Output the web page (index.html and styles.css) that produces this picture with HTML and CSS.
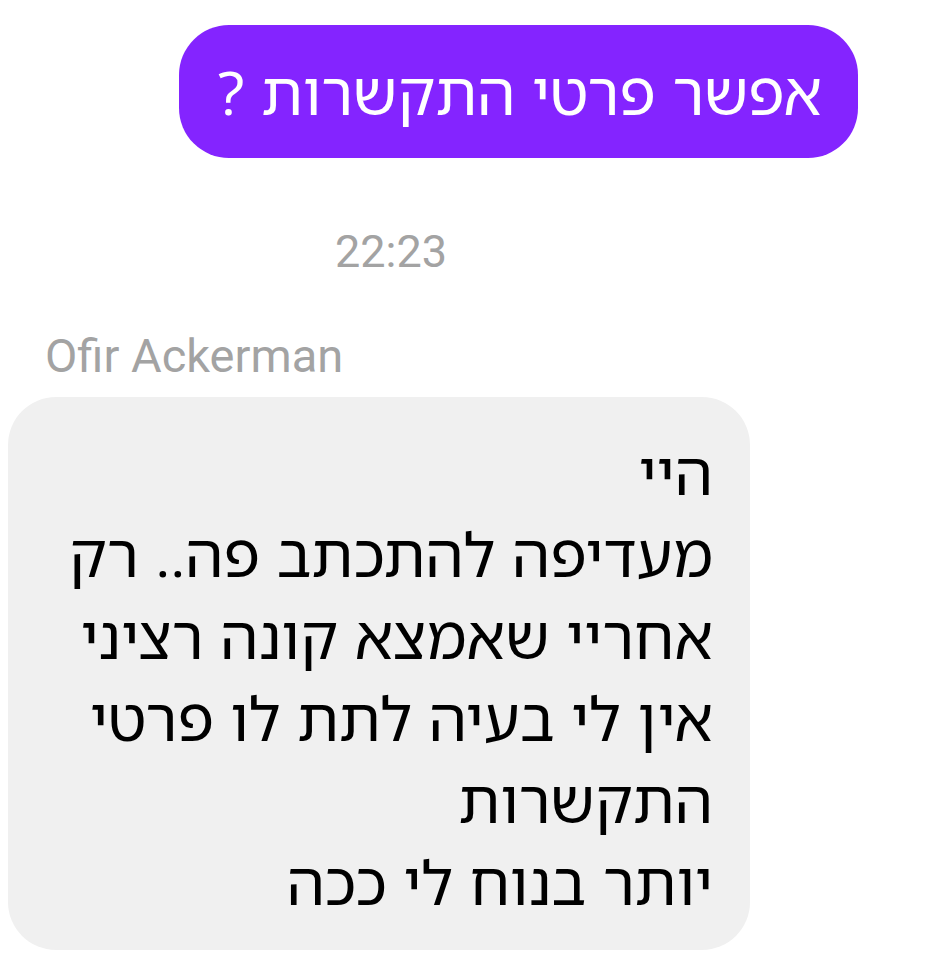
FILE: index.html
```html
<!DOCTYPE html>
<html lang="he">
<head>
<meta charset="utf-8">
<link rel="stylesheet" href="styles.css">
</head>
<body>
<div class="chat">
  <div class="row-out">
    <div class="bubble-out" dir="rtl">אפשר פרטי התקשרות ?</div>
  </div>
  <div class="time">22:23</div>
  <div class="sender">Ofir Ackerman</div>
  <div class="bubble-in" dir="rtl">היי<br>מעדיפה להתכתב פה.. רק<br>אחריי שאמצא קונה רציני<br>אין לי בעיה לתת לו פרטי<br>התקשרות<br>יותר בנוח לי ככה</div>
</div>
</body>
</html>
```
FILE: styles.css
```css
html, body {
  margin: 0;
  padding: 0;
  background: #ffffff;
}
.chat {
  width: 931px;
  height: 967px;
  overflow: hidden;
  font-family: "Noto Sans Hebrew", "Liberation Sans", Roboto, sans-serif;
}
.row-out {
  display: flex;
  justify-content: flex-end;
  padding: 25px 73px 0 0;
}
.bubble-out {
  background: #8424ff;
  color: #ffffff;
  font-size: 61px;
  line-height: 133px;
  height: 133px;
  padding: 0 36px 0 38px;
  border-radius: 50px;
  white-space: nowrap;
}
.time {
  font-family: Roboto, sans-serif;
  color: #a3a3a3;
  font-size: 45px;
  line-height: 50px;
  margin: 69px 0 0 335px;
}
.sender {
  font-family: Roboto, sans-serif;
  color: #a3a3a3;
  font-size: 47px;
  line-height: 50px;
  margin: 54px 0 0 45px;
}
.bubble-in {
  width: 705px;
  margin: 16px 0 0 8px;
  background: #f0f0f0;
  color: #000000;
  font-size: 61px;
  line-height: 82px;
  padding: 34px 37px 27px 0;
  border-radius: 48px;
  white-space: nowrap;
}
```
